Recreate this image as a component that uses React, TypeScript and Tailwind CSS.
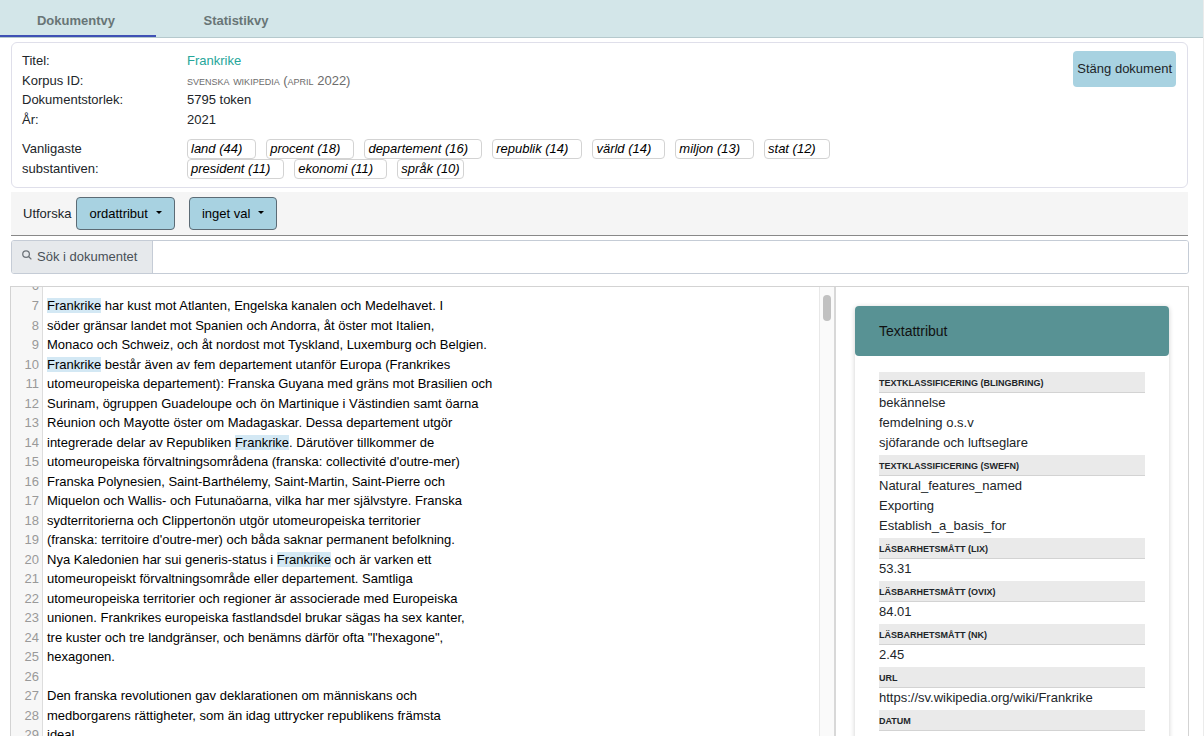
import React from "react";

const nouns = [
  "land (44)",
  "procent (18)",
  "departement (16)",
  "republik (14)",
  "värld (14)",
  "miljon (13)",
  "stat (12)",
  "president (11)",
  "ekonomi (11)",
  "språk (10)",
];

const firstLine = 6;

// Words wrapped in asterisks are drawn highlighted.
const lines = [
  "",
  "*Frankrike* har kust mot Atlanten, Engelska kanalen och Medelhavet. I",
  "söder gränsar landet mot Spanien och Andorra, åt öster mot Italien,",
  "Monaco och Schweiz, och åt nordost mot Tyskland, Luxemburg och Belgien.",
  "*Frankrike* består även av fem departement utanför Europa (Frankrikes",
  "utomeuropeiska departement): Franska Guyana med gräns mot Brasilien och",
  "Surinam, ögruppen Guadeloupe och ön Martinique i Västindien samt öarna",
  "Réunion och Mayotte öster om Madagaskar. Dessa departement utgör",
  "integrerade delar av Republiken *Frankrike*. Därutöver tillkommer de",
  "utomeuropeiska förvaltningsområdena (franska: collectivité d'outre-mer)",
  "Franska Polynesien, Saint-Barthélemy, Saint-Martin, Saint-Pierre och",
  "Miquelon och Wallis- och Futunaöarna, vilka har mer självstyre. Franska",
  "sydterritorierna och Clippertonön utgör utomeuropeiska territorier",
  "(franska: territoire d'outre-mer) och båda saknar permanent befolkning.",
  "Nya Kaledonien har sui generis-status i *Frankrike* och är varken ett",
  "utomeuropeiskt förvaltningsområde eller departement. Samtliga",
  "utomeuropeiska territorier och regioner är associerade med Europeiska",
  "unionen. Frankrikes europeiska fastlandsdel brukar sägas ha sex kanter,",
  "tre kuster och tre landgränser, och benämns därför ofta \"l'hexagone\",",
  "hexagonen.",
  "",
  "Den franska revolutionen gav deklarationen om människans och",
  "medborgarens rättigheter, som än idag uttrycker republikens främsta",
  "ideal",
];

const attributes = [
  { name: "TEXTKLASSIFICERING (BLINGBRING)", values: ["bekännelse", "femdelning o.s.v", "sjöfarande och luftseglare"] },
  { name: "TEXTKLASSIFICERING (SWEFN)", values: ["Natural_features_named", "Exporting", "Establish_a_basis_for"] },
  { name: "LÄSBARHETSMÅTT (LIX)", values: ["53.31"] },
  { name: "LÄSBARHETSMÅTT (OVIX)", values: ["84.01"] },
  { name: "LÄSBARHETSMÅTT (NK)", values: ["2.45"] },
  { name: "URL", values: ["https://sv.wikipedia.org/wiki/Frankrike"] },
  { name: "DATUM", values: ["2021-10-11T14"] },
];

function Line({ text }: { text: string }) {
  return (
    <>
      {text.split("*").map((part, i) =>
        i % 2 === 1 ? (
          <mark key={i} className="bg-[#d3e8f4] text-black">
            {part}
          </mark>
        ) : (
          <React.Fragment key={i}>{part}</React.Fragment>
        ),
      )}
    </>
  );
}

function DropdownButton({ label }: { label: string }) {
  return (
    <button
      type="button"
      aria-haspopup="menu"
      className="flex h-[33px] items-center gap-2 rounded border border-[#5c6b75] bg-[#a8d2e1] px-3 text-black"
    >
      {label}
      <svg viewBox="0 0 6 3" className="mb-0.5 h-[3px] w-1.5" aria-hidden="true">
        <path d="M0 0h6L3 3z" fill="currentColor" />
      </svg>
    </button>
  );
}

export default function App() {
  return (
    <div className="flex h-screen flex-col overflow-hidden border-r border-[#ebebeb] bg-white font-['Liberation_Sans',Arial,sans-serif] text-[13px] leading-normal text-[#212529]">
      <nav role="tablist" className="flex h-[38px] shrink-0 border-b border-[#b5c9cd] bg-[#d3e6e9] font-bold text-[#687576]">
        <button
          type="button"
          role="tab"
          aria-selected="true"
          className="h-[37px] w-[156px] border-b-2 border-[#3f51b5] pt-1.5 pr-1"
        >
          Dokumentvy
        </button>
        <button type="button" role="tab" aria-selected="false" className="h-[37px] w-40 border-b-2 border-transparent pt-1.5">
          Statistikvy
        </button>
      </nav>

      <section className="mt-1 mr-[15px] ml-[11px] flex shrink-0 items-start justify-between rounded-md border border-[#dfdfea] pt-2 pr-[11px] pb-2 pl-2.5">
        <dl className="grid grid-cols-[165px_minmax(0,1fr)]">
          <dt>Titel:</dt>
          <dd>
            <a href="#frankrike" className="text-[#26a69a]">
              Frankrike
            </a>
          </dd>
          <dt>Korpus ID:</dt>
          <dd className="text-[#6c6c6c] [font-variant:small-caps]">svenska wikipedia (april 2022)</dd>
          <dt>Dokumentstorlek:</dt>
          <dd>5795 token</dd>
          <dt>År:</dt>
          <dd>2021</dd>
          <dt className="w-24 pt-2.5">Vanligaste substantiven:</dt>
          <dd className="pt-2.5">
            <ul className="flex max-w-[660px] flex-wrap gap-x-2.5 text-black italic">
              {nouns.map((noun) => (
                <li
                  key={noun}
                  className="h-5 rounded border border-[#d3d3d3] pr-[13px] pl-[3px] leading-[18px] last:pr-[3px]"
                >
                  {noun}
                </li>
              ))}
            </ul>
          </dd>
        </dl>
        <button type="button" className="h-9 shrink-0 rounded bg-[#a8d2e1] px-1">
          Stäng dokument
        </button>
      </section>

      <div className="mt-1 mr-[15px] ml-[11px] flex h-11 shrink-0 items-center border-b border-[#888] bg-[#f5f5f5] pl-3">
        <span className="mr-[5px]">Utforska</span>
        <div className="flex gap-3.5">
          <DropdownButton label="ordattribut" />
          <DropdownButton label="inget val" />
        </div>
      </div>

      <div className="mt-1 mr-3.5 ml-[11px] flex h-[34px] shrink-0 overflow-hidden rounded-[3px] border border-[#c5ccd6]">
        <label
          htmlFor="document-search"
          className="flex items-center gap-[5px] border-r border-[#c5ccd6] bg-[#e6e9ec] pr-[15px] pl-2.5 text-[#495057]"
        >
          <svg viewBox="0 0 16 16" className="mb-1 h-2.5 w-2.5 text-[#6c7278]" fill="none" stroke="currentColor" strokeWidth="2" aria-hidden="true">
            <circle cx="6.5" cy="6.5" r="5.3" />
            <path d="M10.5 10.5L15 15" />
          </svg>
          Sök i dokumentet
        </label>
        <input id="document-search" type="text" className="min-w-0 flex-1 bg-white px-3 outline-none" />
      </div>

      <main className="mt-3 mr-3.5 ml-2.5 flex min-h-0 flex-1 border border-b-0 border-[#d3d3d3]">
        <div className="flex min-w-0 flex-1 overflow-hidden border-r-2 border-[#d8d8d8]">
          <ol className="-mt-[11px] flex-1 self-start text-black">
            {lines.map((text, i) => (
              <li key={i} className="flex first:h-5">
                <span className="w-8 shrink-0 border-r border-[#ddd] bg-[#f7f7f7] pr-[3px] text-right text-[#999]">
                  {firstLine + i}
                </span>
                <span className="pl-1 whitespace-pre">
                  <Line text={text} />
                </span>
              </li>
            ))}
          </ol>
          <div className="w-[15px] shrink-0 border-l border-[#e8e8e8] bg-[#fafafa] pt-2 pl-[3px]">
            <div className="h-[26px] w-2 rounded-full bg-[#c1c1c1]" />
          </div>
        </div>

        <aside className="w-[352px] shrink-0 overflow-hidden px-[19px] pt-[19px]">
          <div className="rounded shadow-[0_1px_5px_rgba(0,0,0,0.2)]">
            <h2 className="flex h-[50px] items-center rounded bg-[#589294] px-6 text-sm text-[#111]">Textattribut</h2>
            <dl className="flex flex-col gap-0.5 px-6 pt-4 pb-6">
              {attributes.map(({ name, values }) => (
                <div key={name}>
                  <dt className="h-[21px] border-b border-[#d3d3d3] bg-[#eaeaea] text-[9px] leading-[22px] font-bold">{name}</dt>
                  {values.map((value) => (
                    <dd key={value} className="leading-5">
                      {value}
                    </dd>
                  ))}
                </div>
              ))}
            </dl>
          </div>
        </aside>
      </main>
    </div>
  );
}
